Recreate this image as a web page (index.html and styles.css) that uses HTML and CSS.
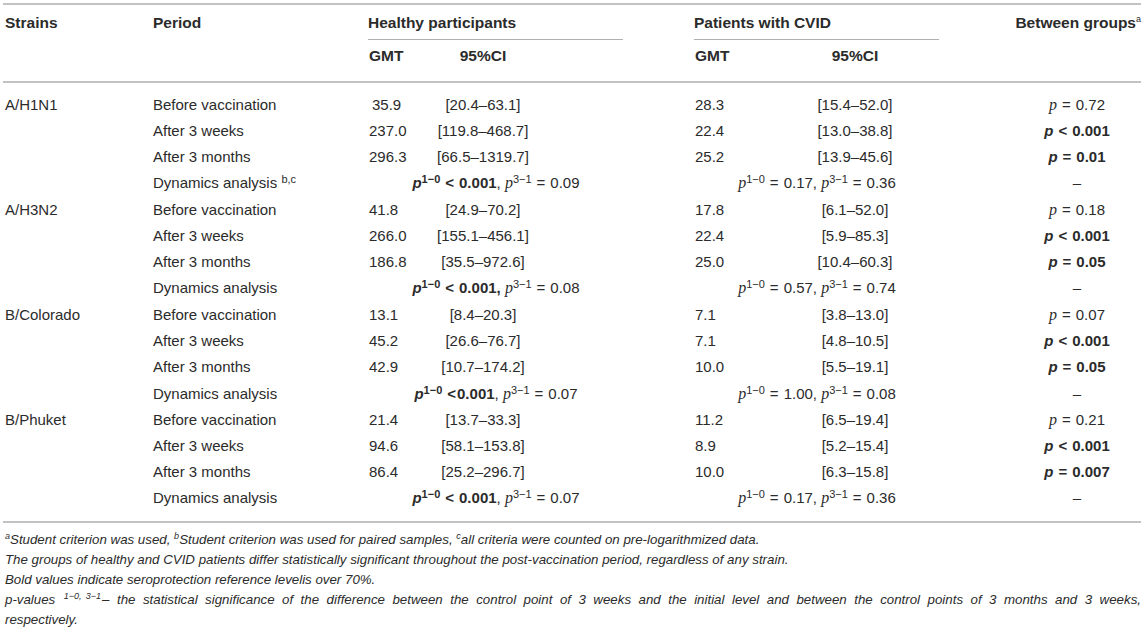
FILE: index.html
```html
<!DOCTYPE html>
<html>
<head>
<meta charset="utf-8">
<link rel="stylesheet" href="styles.css">
</head>
<body>
<div class="wrap">
<table class="tbl">
<colgroup>
<col class="c1"><col class="c2"><col class="c3"><col class="c4"><col class="c5"><col class="c6"><col class="c7"><col class="c8">
</colgroup>
<thead>
<tr class="h1">
<th class="strain">Strains</th>
<th class="period">Period</th>
<th colspan="2" class="grp"><div class="grpline">Healthy participants</div></th>
<th></th>
<th colspan="2" class="grp"><div class="grpline">Patients with CVID</div></th>
<th class="between">Between groups<sup>a</sup></th>
</tr>
<tr class="h2">
<th></th><th></th>
<th class="gmt">GMT</th><th class="ci1">95%CI</th>
<th></th>
<th class="gmt">GMT</th><th class="ci2">95%CI</th>
<th></th>
</tr>
</thead>
<tbody>
<tr class="first">
<td class="strain">A/H1N1</td><td class="period">Before vaccination</td>
<td class="gmt ind">35.9</td><td class="ci1">[20.4–63.1]</td><td></td>
<td class="gmt">28.3</td><td class="ci2">[15.4–52.0]</td>
<td class="bg"><i class="p">p</i><span class="op">=</span>0.72</td>
</tr>
<tr>
<td></td><td class="period">After 3 weeks</td>
<td class="gmt">237.0</td><td class="ci1">[119.8–468.7]</td><td></td>
<td class="gmt">22.4</td><td class="ci2">[13.0–38.8]</td>
<td class="bg"><b><i class="pb">p</i><span class="op">&lt;</span>0.001</b></td>
</tr>
<tr>
<td></td><td class="period">After 3 months</td>
<td class="gmt">296.3</td><td class="ci1">[66.5–1319.7]</td><td></td>
<td class="gmt">25.2</td><td class="ci2">[13.9–45.6]</td>
<td class="bg"><b><i class="pb">p</i><span class="op">=</span>0.01</b></td>
</tr>
<tr>
<td></td><td class="period">Dynamics analysis <sup>b,c</sup></td>
<td colspan="2" class="dyn"><b><i class="pb">p</i><sup>1−0</sup><span class="op">&lt;</span>0.001</b>, <i class="p">p</i><sup>3−1</sup><span class="op">=</span>0.09</td><td></td>
<td colspan="2" class="dyn"><i class="p">p</i><sup>1−0</sup><span class="op">=</span>0.17, <i class="p">p</i><sup>3−1</sup><span class="op">=</span>0.36</td>
<td class="bg">–</td>
</tr>
<tr>
<td class="strain">A/H3N2</td><td class="period">Before vaccination</td>
<td class="gmt">41.8</td><td class="ci1">[24.9–70.2]</td><td></td>
<td class="gmt">17.8</td><td class="ci2">[6.1–52.0]</td>
<td class="bg"><i class="p">p</i><span class="op">=</span>0.18</td>
</tr>
<tr>
<td></td><td class="period">After 3 weeks</td>
<td class="gmt">266.0</td><td class="ci1">[155.1–456.1]</td><td></td>
<td class="gmt">22.4</td><td class="ci2">[5.9–85.3]</td>
<td class="bg"><b><i class="pb">p</i><span class="op">&lt;</span>0.001</b></td>
</tr>
<tr>
<td></td><td class="period">After 3 months</td>
<td class="gmt">186.8</td><td class="ci1">[35.5–972.6]</td><td></td>
<td class="gmt">25.0</td><td class="ci2">[10.4–60.3]</td>
<td class="bg"><b><i class="pb">p</i><span class="op">=</span>0.05</b></td>
</tr>
<tr>
<td></td><td class="period">Dynamics analysis</td>
<td colspan="2" class="dyn"><b><i class="pb">p</i><sup>1−0</sup><span class="op">&lt;</span>0.001,</b> <i class="p">p</i><sup>3−1</sup><span class="op">=</span>0.08</td><td></td>
<td colspan="2" class="dyn"><i class="p">p</i><sup>1−0</sup><span class="op">=</span>0.57, <i class="p">p</i><sup>3−1</sup><span class="op">=</span>0.74</td>
<td class="bg">–</td>
</tr>
<tr>
<td class="strain">B/Colorado</td><td class="period">Before vaccination</td>
<td class="gmt">13.1</td><td class="ci1">[8.4–20.3]</td><td></td>
<td class="gmt">7.1</td><td class="ci2">[3.8–13.0]</td>
<td class="bg"><i class="p">p</i><span class="op">=</span>0.07</td>
</tr>
<tr>
<td></td><td class="period">After 3 weeks</td>
<td class="gmt">45.2</td><td class="ci1">[26.6–76.7]</td><td></td>
<td class="gmt">7.1</td><td class="ci2">[4.8–10.5]</td>
<td class="bg"><b><i class="pb">p</i><span class="op">&lt;</span>0.001</b></td>
</tr>
<tr>
<td></td><td class="period">After 3 months</td>
<td class="gmt">42.9</td><td class="ci1">[10.7–174.2]</td><td></td>
<td class="gmt">10.0</td><td class="ci2">[5.5–19.1]</td>
<td class="bg"><b><i class="pb">p</i><span class="op">=</span>0.05</b></td>
</tr>
<tr>
<td></td><td class="period">Dynamics analysis</td>
<td colspan="2" class="dyn"><b><i class="pb">p</i><sup>1−0</sup><span class="op opl">&lt;</span>0.001</b>, <i class="p">p</i><sup>3−1</sup><span class="op">=</span>0.07</td><td></td>
<td colspan="2" class="dyn"><i class="p">p</i><sup>1−0</sup><span class="op">=</span>1.00, <i class="p">p</i><sup>3−1</sup><span class="op">=</span>0.08</td>
<td class="bg">–</td>
</tr>
<tr>
<td class="strain">B/Phuket</td><td class="period">Before vaccination</td>
<td class="gmt">21.4</td><td class="ci1">[13.7–33.3]</td><td></td>
<td class="gmt">11.2</td><td class="ci2">[6.5–19.4]</td>
<td class="bg"><i class="p">p</i><span class="op">=</span>0.21</td>
</tr>
<tr>
<td></td><td class="period">After 3 weeks</td>
<td class="gmt">94.6</td><td class="ci1">[58.1–153.8]</td><td></td>
<td class="gmt">8.9</td><td class="ci2">[5.2–15.4]</td>
<td class="bg"><b><i class="pb">p</i><span class="op">&lt;</span>0.001</b></td>
</tr>
<tr>
<td></td><td class="period">After 3 months</td>
<td class="gmt">86.4</td><td class="ci1">[25.2–296.7]</td><td></td>
<td class="gmt">10.0</td><td class="ci2">[6.3–15.8]</td>
<td class="bg"><b><i class="pb">p</i><span class="op">=</span>0.007</b></td>
</tr>
<tr class="last">
<td></td><td class="period">Dynamics analysis</td>
<td colspan="2" class="dyn"><b><i class="pb">p</i><sup>1−0</sup><span class="op">&lt;</span>0.001</b>, <i class="p">p</i><sup>3−1</sup><span class="op">=</span>0.07</td><td></td>
<td colspan="2" class="dyn"><i class="p">p</i><sup>1−0</sup><span class="op">=</span>0.17, <i class="p">p</i><sup>3−1</sup><span class="op">=</span>0.36</td>
<td class="bg">–</td>
</tr>
</tbody>
</table>
<div class="notes">
<p><sup>a</sup>Student criterion was used, <sup>b</sup>Student criterion was used for paired samples, <sup>c</sup>all criteria were counted on pre-logarithmized data.</p>
<p>The groups of healthy and CVID patients differ statistically significant throughout the post-vaccination period, regardless of any strain.</p>
<p>Bold values indicate seroprotection reference levelis over 70%.</p>
<p class="wrapnote">p-values <sup class="pv">1−0,&nbsp;3−1</sup>– the statistical significance of the difference between the control point of 3 weeks and the initial level and between the control points of 3 months and 3 weeks, respectively.</p>
</div>
</div>
</body>
</html>
```

FILE: styles.css
```css
html, body {
  margin: 0;
  padding: 0;
  background: #fff;
}
body {
  font-family: "Liberation Sans", Arial, sans-serif;
  color: #2b2b2b;
  font-size: 15px;
}
.wrap {
  padding: 3px 3px 0 3px;
  width: 1138px;
}
.tbl {
  border-collapse: collapse;
  table-layout: fixed;
  width: 1138px;
  border-top: 2px solid #c2c2c2;
  border-bottom: 2px solid #c2c2c2;
}
.c1 { width: 147px; }
.c2 { width: 216px; }
.c3 { width: 44px; }
.c4 { width: 216px; }
.c5 { width: 66px; }
.c6 { width: 48px; }
.c7 { width: 202px; }
.c8 { width: 199px; }

th, td {
  padding: 0;
  white-space: nowrap;
  text-align: left;
  vertical-align: middle;
}
th {
  font-weight: bold;
  font-size: 15.5px;
}
thead {
  border-bottom: 2px solid #c2c2c2;
}
.h1 th {
  height: 35px;
  line-height: 18px;
}
.h1 th.grp {
  vertical-align: bottom;
}
.grpline {
  border-bottom: 1px solid #b0b0b0;
  margin: 0 3px 0 2px;
  line-height: 18px;
  box-sizing: border-box;
  height: 35px;
  padding-top: 9px;
}
.h2 th {
  height: 34px;
  vertical-align: top;
  padding-top: 7px;
  line-height: 18px;
}
.strain { padding-left: 2px; }
.period { padding-left: 3px; }
.gmt { padding-left: 3px; }
.ind { padding-left: 6px; }
.ci1 { text-align: center; padding-right: 70px; }
.ci2 { text-align: center; padding-left: 28px; }
.between { text-align: right; }
.dyn { text-align: center; }
.bg { text-align: center; padding-left: 71px; }

tbody tr { height: 26.27px; }
tbody td { line-height: 18px; }
tbody tr.first { height: 35.77px; }
tbody tr.first td { padding-top: 9.5px; }
tbody tr.last { height: 36.27px; }
tbody tr.last td { padding-bottom: 10px; }

sup {
  font-size: 11px;
  line-height: 1;
  vertical-align: 5px;
}
.between sup { font-size: 9px; font-weight: normal; vertical-align: 6px; }
.p {
  font-family: "Liberation Serif", "Times New Roman", serif;
  font-style: italic;
  font-size: 16px;
}
.pb {
  font-style: italic;
  font-weight: bold;
}
.op {
  padding: 0 5px;
}
.opl {
  padding-right: 1px;
}

.notes {
  padding-top: 7.5px;
  padding-left: 2px;
  font-style: italic;
  font-size: 13.3px;
  line-height: 20px;
  color: #2b2b2b;
}
.notes p {
  margin: 0;
  white-space: nowrap;
}
.notes p.wrapnote {
  white-space: normal;
  width: 1136px;
  text-align: justify;
  word-spacing: 2px;
}
.notes sup {
  font-size: 9px;
  line-height: 1;
  vertical-align: 5px;
}
.notes sup.pv {
  margin: 0 1px 0 1px;
  word-spacing: 0;
}
```
